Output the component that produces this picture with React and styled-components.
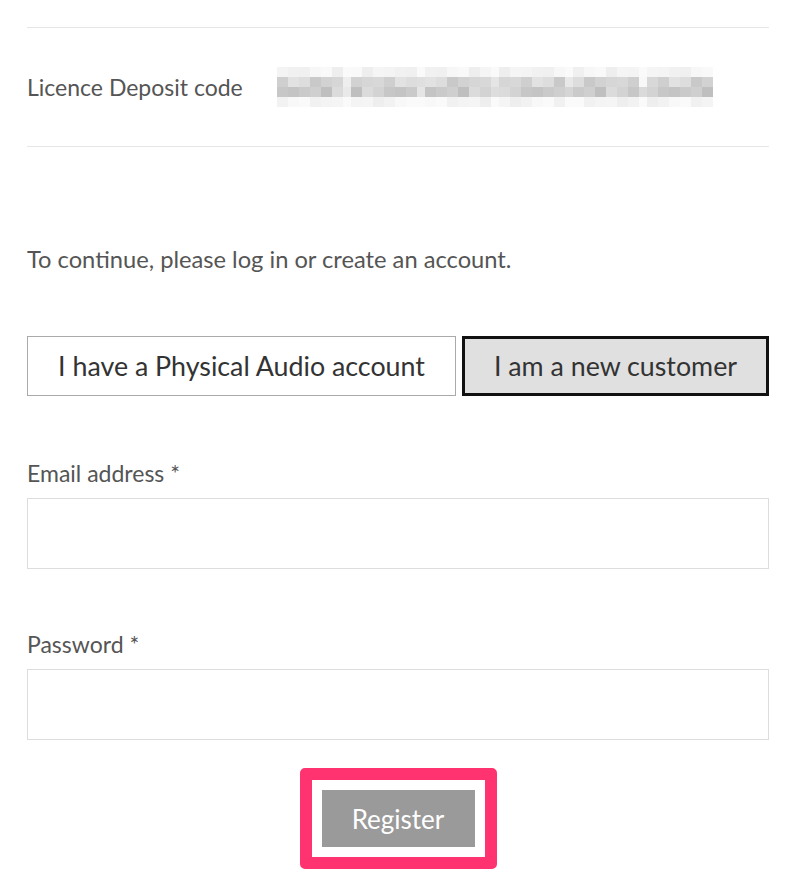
import React from "react";
import styled, { createGlobalStyle } from "styled-components";

const GlobalStyle = createGlobalStyle`
  html, body {
    margin: 0;
    padding: 0;
    background: #fff;
  }
  body {
    font-family: Lato, "Liberation Sans", sans-serif;
    color: #555;
  }
`;

const Page = styled.div`
  width: 742px;
  padding: 27px 0 0 27px;
`;

const Rule = styled.div`
  height: 1px;
  background: #e6e6e6;
`;

const CodeRow = styled.div`
  display: flex;
  align-items: center;
  height: 118px;
`;

const CodeLabel = styled.div`
  width: 250px;
  font-size: 23px;
  color: #555;
`;

const Intro = styled.p`
  margin: 97px 0 0;
  font-size: 23.7px;
  line-height: 30px;
`;

const Tabs = styled.div`
  display: flex;
  gap: 6px;
  margin-top: 62px;
`;

const Tab = styled.button`
  height: 60px;
  box-sizing: border-box;
  flex: ${p => (p.$wide ? "0 0 429px" : "1 1 auto")};
  font-family: inherit;
  font-size: 26.8px;
  color: #333;
  background: ${p => (p.$active ? "#e0e0e0" : "#fff")};
  border: ${p => (p.$active ? "3px solid #111" : "1px solid #aaa")};
  border-radius: 0;
  padding: 0;
  cursor: pointer;
`;

const Field = styled.div`
  margin-top: ${p => p.$top}px;
`;

const Label = styled.label`
  display: block;
  font-size: 23px;
  line-height: 30px;
  margin-bottom: 10px;
`;

const Input = styled.input`
  display: block;
  width: 100%;
  height: 71px;
  box-sizing: border-box;
  border: 1px solid #ddd;
  background: #fff;
  outline: none;
`;

const Actions = styled.div`
  display: flex;
  justify-content: center;
  margin-top: 28px;
`;

const Highlight = styled.div`
  border: 12px solid #ff3370;
  border-radius: 5px;
  padding: 10px;
`;

const Submit = styled.button`
  width: 153px;
  height: 57px;
  display: block;
  border: none;
  background: #9a9a9a;
  color: #fff;
  font-family: inherit;
  font-size: 26px;
  padding: 0;
`;

const shades = [
  [0xf4, 0xee, 0xf7, 0xf1, 0xf5, 0xf9, 0xf0],
  [0xd2, 0xdd, 0xcf, 0xd6, 0xc9, 0xe2, 0xd8],
  [0xc4, 0xd3, 0xbf, 0xca, 0xc7, 0xdb, 0xcf],
  [0xf5, 0xf1, 0xf8, 0xee, 0xf4, 0xfa, 0xf2],
];

const BlurredCode = () => {
  const cells = [];
  for (let g = 0; g < 6; g++) {
    for (let c = 0; c < 7; c++) {
      for (let r = 0; r < 4; r++) {
        const edge = c === 6;
        const base = shades[r][(c * 3 + g * 5 + r * 2) % 7];
        const v = edge ? Math.min(250, base + 22) : base;
        cells.push(
          <rect
            key={`${g}-${c}-${r}`}
            x={g * 74 + c * 11}
            y={r * 10}
            width={11}
            height={10}
            fill={`rgb(${v},${v},${v})`}
          />
        );
      }
    }
  }
  return (
    <svg width="436" height="40" viewBox="0 0 436 40">
      {cells}
    </svg>
  );
};

const App = () => (
  <>
    <GlobalStyle />
    <Page>
      <Rule />
      <CodeRow>
        <CodeLabel>Licence Deposit code</CodeLabel>
        <BlurredCode />
      </CodeRow>
      <Rule />
      <Intro>To continue, please log in or create an account.</Intro>
      <Tabs>
        <Tab $wide>I have a Physical Audio account</Tab>
        <Tab $active>I am a new customer</Tab>
      </Tabs>
      <Field $top={62}>
        <Label>Email address *</Label>
        <Input type="email" />
      </Field>
      <Field $top={60}>
        <Label>Password *</Label>
        <Input type="password" />
      </Field>
      <Actions>
        <Highlight>
          <Submit>Register</Submit>
        </Highlight>
      </Actions>
    </Page>
  </>
);

export default App;
